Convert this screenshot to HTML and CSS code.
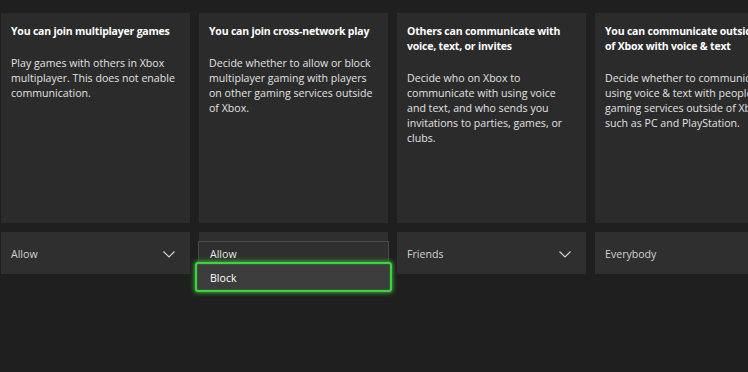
FILE: index.html
```html
<!DOCTYPE html>
<html>
<head>
<meta charset="utf-8">
<link rel="stylesheet" href="styles.css">
</head>
<body>
<div class="row">
  <div class="col">
    <div class="card">
      <h2 class="title">You can join multiplayer games</h2>
      <p class="desc">Play games with others in Xbox multiplayer. This does not enable communication.</p>
    </div>
    <div class="select">
      <span>Allow</span>
      <svg class="chev" width="12" height="7" viewBox="0 0 12 7"><path d="M0.5 0.5 L6 6 L11.5 0.5" fill="none" stroke="#cfcfcf" stroke-width="1.2"/></svg>
    </div>
  </div>
  <div class="col">
    <div class="card">
      <h2 class="title">You can join cross-network play</h2>
      <p class="desc">Decide whether to allow or block multiplayer gaming with players on other gaming services outside of Xbox.</p>
    </div>
    <div class="select open">
      <ul class="menu">
        <li class="opt">Allow</li>
        <li class="opt focused">Block</li>
      </ul>
    </div>
  </div>
  <div class="col">
    <div class="card">
      <h2 class="title">Others can communicate with voice, text, or invites</h2>
      <p class="desc">Decide who on Xbox to communicate with using voice and text, and who sends you invitations to parties, games, or clubs.</p>
    </div>
    <div class="select">
      <span>Friends</span>
      <svg class="chev" width="12" height="7" viewBox="0 0 12 7"><path d="M0.5 0.5 L6 6 L11.5 0.5" fill="none" stroke="#cfcfcf" stroke-width="1.2"/></svg>
    </div>
  </div>
  <div class="col">
    <div class="card">
      <h2 class="title">You can communicate outside<br>of Xbox with voice &amp; text</h2>
      <p class="desc">Decide whether to communicate using voice &amp; text with people on gaming services outside of Xbox, such as PC and PlayStation.</p>
    </div>
    <div class="select">
      <span>Everybody</span>
      <svg class="chev" width="12" height="7" viewBox="0 0 12 7"><path d="M0.5 0.5 L6 6 L11.5 0.5" fill="none" stroke="#cfcfcf" stroke-width="1.2"/></svg>
    </div>
  </div>
</div>
</body>
</html>
```

FILE: styles.css
```css
html, body {
  margin: 0;
  padding: 0;
  background: #1f1f1f;
  width: 748px;
  height: 372px;
  overflow: hidden;
  font-family: "Open Sans", "Noto Sans", sans-serif;
}
.row {
  display: grid;
  grid-template-columns: repeat(4, 189px);
  column-gap: 9px;
  padding: 13px 0 0 1px;
}
.col {
  display: flex;
  flex-direction: column;
  gap: 9px;
  position: relative;
}
.card {
  background: #2b2b2b;
  height: 210px;
  padding: 11px 10px 0 10px;
  box-sizing: border-box;
}
.title {
  margin: 0;
  font-size: 10.5px;
  letter-spacing: -0.2px;
  line-height: 15px;
  font-weight: 700;
  color: #ffffff;
}
.desc {
  margin: 17px 0 0 0;
  font-size: 10.6px;
  line-height: 15px;
  color: #e2e2e2;
}
.select {
  height: 42px;
  box-sizing: border-box;
  padding: 2px 10px 0 10px;
  background: #2f2f2f;
  display: flex;
  align-items: center;
  justify-content: space-between;
  font-size: 10.6px;
  color: #d2d2d2;
  position: relative;
}
.chev { margin-right: 5px; }
.menu {
  position: absolute;
  list-style: none;
  margin: 0;
  padding: 0;
  left: -1px;
  right: -1px;
  top: 9px;
}
.opt {
  height: 21px;
  line-height: 24px;
  padding-left: 11px;
  font-size: 10.6px;
  color: #e6e6e6;
  background: #2f2f2f;
  border: 1px solid #4a4a4a;
  border-bottom: none;
  box-sizing: border-box;
}
.opt.focused {
  margin: 0 -3px;
  height: 30px;
  line-height: 28px;
  padding-left: 13px;
  background: #3c3c3c;
  color: #ffffff;
  border: 2px solid #3fd23f;
  border-radius: 3px;
  box-shadow: 0 0 4px 1px rgba(60, 220, 60, 0.7), inset 0 0 2px rgba(60, 220, 60, 0.5);
}
```
